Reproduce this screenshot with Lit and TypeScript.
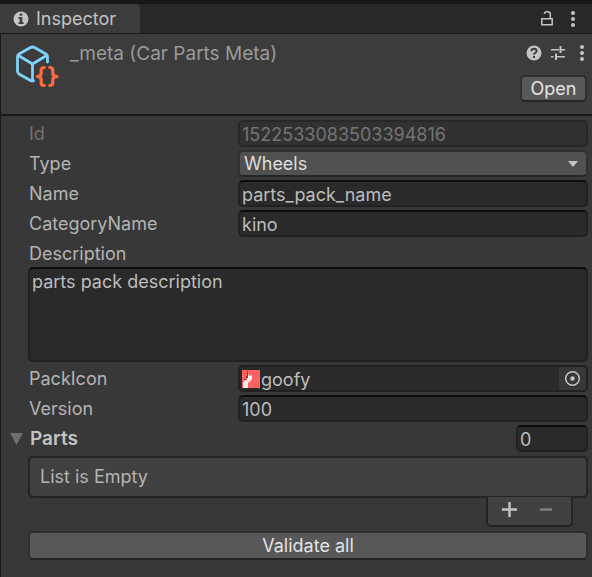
import { LitElement, html, css, svg } from "lit";
import { customElement } from "lit/decorators.js";

const dots = svg`<circle cx="3" cy="2" r="2"/><circle cx="3" cy="8" r="2"/><circle cx="3" cy="14" r="2"/>`;

@customElement("app-root")
export class AppRoot extends LitElement {
  static styles = css`
    :host {
      display: block;
      min-height: 100vh;
      box-sizing: border-box;
      padding-top: 4px;
      background: #191919;
      color: #b4b4b4;
      font: 18px/24px Inter, "Noto Sans", sans-serif;
    }
    * { box-sizing: border-box; }
    button, input, select, textarea {
      font: inherit;
      color: inherit;
      margin: 0;
      padding: 0;
      border: 0;
      outline: 0;
      min-width: 0;
    }
    svg { display: block; fill: #c4c4c4; flex: none; }
    .inspector {
      display: flex;
      flex-direction: column;
      min-height: calc(100vh - 4px);
    }
    .tabs {
      display: flex;
      align-items: stretch;
      height: 29px;
      background: #282828;
    }
    .tab {
      display: flex;
      align-items: center;
      gap: 7px;
      width: 140px;
      padding: 1px 0 0 13px;
      background: #3c3c3c;
      border-radius: 0 4px 0 0;
      color: #c4c4c4;
    }
    .tools {
      display: flex;
      align-items: center;
      margin-left: auto;
      padding-right: 16px;
      gap: 17px;
    }
    .icon { background: none; display: block; }
    .header {
      display: flex;
      height: 80px;
      margin: 1px 0 2px 1px;
      padding: 8px 5px 0 14px;
      background: #3c3c3c;
    }
    .title {
      flex: 1;
      margin: 0 0 0 11px;
      font-size: 19px;
      line-height: 24px;
      font-weight: 400;
      font-optical-sizing: none;
      color: #9a9a9a;
      white-space: nowrap;
    }
    .actions {
      display: flex;
      flex-direction: column;
      align-items: flex-end;
      gap: 14px;
      padding-top: 3px;
    }
    .actions .tools { padding: 0 2px 0 0; gap: 8px; }
    .actions .tools .more { margin-left: 5px; }
    .button {
      height: 27px;
      border: 2px solid #303030;
      border-bottom-color: #242424;
      border-radius: 5px;
      background: #585858;
      color: #e4e4e4;
      line-height: 23px;
    }
    .open { width: 67px; }
    .body {
      flex: 1;
      display: flex;
      flex-direction: column;
      gap: 3px;
      margin-left: 1px;
      padding: 4px 4px 8px 27px;
      background: #383838;
    }
    .row {
      display: grid;
      grid-template-columns: 210px 1fr;
      align-items: center;
      height: 27px;
    }
    label { padding-left: 1px; }
    .field {
      width: 100%;
      height: 27px;
      border: 2px solid #212121;
      border-top-color: #0d0d0d;
      border-radius: 5px;
      background: #2a2a2a;
      padding: 1px 2px 0;
      color: #bdbdbd;
    }
    .disabled { color: #717171; }
    .field:disabled {
      background: #313131;
      border-color: #272727;
      color: #747474;
    }
    .select { position: relative; }
    .select select {
      display: block;
      appearance: none;
      width: 100%;
      height: 27px;
      padding: 0 4px;
      border: 2px solid #303030;
      border-bottom-color: #242424;
      border-radius: 5px;
      background: #515151;
      color: #dedede;
    }
    .select svg {
      position: absolute;
      right: 9px;
      top: 11px;
      pointer-events: none;
    }
    .block { display: flex; flex-direction: column; }
    .block label { height: 27px; line-height: 27px; }
    textarea.field {
      display: block;
      height: 95px;
      padding: 1px 2px;
      resize: none;
    }
    .object {
      display: flex;
      align-items: center;
      border-color: #212121;
      padding: 0 0 0 2px;
    }
    .object input { flex: 1; background: none; height: 23px; padding: 2px 0 0 1px; }
    .picker {
      display: flex;
      align-items: center;
      justify-content: center;
      width: 27px;
      height: 23px;
      background: #383838;
      border-radius: 0 3px 3px 0;
    }
    .parts {
      display: flex;
      align-items: center;
      height: 27px;
      margin-left: -18px;
    }
    .fold {
      display: flex;
      align-items: center;
      gap: 7px;
      margin-right: auto;
      background: none;
      font-size: 19px;
      font-weight: 600;
      font-optical-sizing: none;
      color: #c4c4c4;
    }
    .fold svg { fill: #6e6e6e; }
    .parts .field { width: 72px; }
    .list { display: flex; flex-direction: column; margin: 1px 0; }
    .empty {
      height: 42px;
      padding: 0 10px;
      border: 2px solid #242424;
      border-radius: 5px;
      background: #414141;
      line-height: 38px;
    }
    .footer {
      display: flex;
      align-items: center;
      align-self: flex-end;
      gap: 22px;
      width: 87px;
      height: 30px;
      margin: -1px 15px 0 0;
      padding: 0 0 4px 14px;
      border: 2px solid #242424;
      border-top: 0;
      border-radius: 0 0 5px 5px;
      background: #414141;
    }
    .validate { width: 100%; height: 29px; line-height: 25px; }
  `;

  private field(id: string, label: string, value: string, disabled = false) {
    return html`<div class="row">
      <label for=${id} class=${disabled ? "disabled" : ""}>${label}</label>
      <input class="field" id=${id} .value=${value} ?disabled=${disabled} />
    </div>`;
  }

  render() {
    return html`<main class="inspector">
      <nav class="tabs">
        <button class="tab">
          <svg width="16" height="16" viewBox="0 0 16 16">
            <circle cx="8" cy="8" r="7.5" />
            <path fill="#3c3c3c" d="M6.7 2.5h2.600v2.300H6.700zM5.500 6h3.800v5.200h1.300v1.800H5.500v-1.800h1.200V7.800H5.500z" />
          </svg>
          Inspector
        </button>
        <div class="tools">
          <button class="icon" aria-label="Lock">
            <svg width="12" height="16" viewBox="0 0 12 16">
              <path fill="none" stroke="#c4c4c4" stroke-width="1.500" d="M.8 7.800h10.400v6H.8zM9.300 7.500V3.200Q9.300 1 7 .8H5.600Q3.500 .9 3.200 2.800" />
            </svg>
          </button>
          <button class="icon" aria-label="Tab menu">
            <svg width="6" height="16" viewBox="0 0 6 16">${dots}</svg>
          </button>
        </div>
      </nav>

      <header class="header">
        <svg width="44" height="48" viewBox="0 0 44 48">
          <g fill="none" stroke-linejoin="round" stroke-linecap="round">
            <path stroke="#7fd2fb" stroke-width="2.800" d="M32.500 20V14.500Q32.500 13 31 12L19.500 5.500Q17.500 4.500 15.500 5.500L4 12Q2.500 13 2.500 15V29Q2.500 31 4 32L15.500 38.500Q17.500 39.500 18.500 38.700M3 13.200L17.500 22L32 13.200M17.500 22V39" />
            <path stroke="#ff6b3d" stroke-width="3.200" stroke-linecap="butt" d="M30.500 25.500H29Q26.200 25.500 26.200 28.500V31Q26.200 34.500 22.500 34.500Q26.200 34.500 26.200 38V40.500Q26.200 43.500 29 43.500H30.500M33.500 25.500H35Q37.800 25.500 37.800 28.500V31Q37.800 34.500 42 34.500Q37.800 34.500 37.800 38V40.500Q37.800 43.500 35 43.500H33.500" />
          </g>
        </svg>
        <h1 class="title">_meta (Car Parts Meta)</h1>
        <div class="actions">
          <div class="tools">
            <button class="icon" aria-label="Help">
              <svg width="16" height="16" viewBox="0 0 16 16">
                <circle cx="8" cy="8" r="7.500" />
                <path fill="none" stroke="#3c3c3c" stroke-width="1.900" d="M5.400 6.200Q5.400 3.700 8 3.700T10.600 6Q10.600 7.200 9.200 7.800Q8 8.400 8 9.800" />
                <path fill="#3c3c3c" d="M7 11h2v2H7z" />
              </svg>
            </button>
            <button class="icon" aria-label="Presets">
              <svg width="16" height="16" viewBox="0 0 16 16">
                <path d="M1 4h8v1.500H1zM9.500 1h2v7h-2zM11.500 4H15v1.500h-3.500zM1 11h2.500v1.500H1zM5 8.500h2V15H5zM7 11h8v1.500H7z" />
              </svg>
            </button>
            <button class="icon more" aria-label="Component menu">
              <svg width="6" height="16" viewBox="0 0 6 16">${dots}</svg>
            </button>
          </div>
          <button class="button open">Open</button>
        </div>
      </header>

      <form class="body" @submit=${(e: Event) => e.preventDefault()}>
        ${this.field("id", "Id", "1522533083503394816", true)}
        <div class="row">
          <label for="type">Type</label>
          <div class="select">
            <select id="type"><option>Wheels</option></select>
            <svg width="12" height="7" viewBox="0 0 12 7"><path d="M1 0h10L6 6z" /></svg>
          </div>
        </div>
        ${this.field("name", "Name", "parts_pack_name")}
        ${this.field("category", "CategoryName", "kino")}
        <div class="block">
          <label for="description">Description</label>
          <textarea class="field" id="description" .value=${"parts pack description"}></textarea>
        </div>
        <div class="row">
          <label for="icon">PackIcon</label>
          <div class="field object">
            <svg width="18" height="18" viewBox="0 0 18 18">
              <path fill="#ff6062" d="M0 0h18v18H0z" />
              <path fill="#f4eceb" d="M1 18V13l2-3 3 1 0 7zM5 4l1-1 1 3 3-1v4l-3 4-2-2z" />
              <path fill="#7a4148" d="M5 1h1v5H5zM4 6h2v2H4zM2 9h2v1H2z" />
            </svg>
            <input id="icon" value="goofy" />
            <button class="picker" type="button" aria-label="Select object">
              <svg width="17" height="17" viewBox="0 0 17 17">
                <circle cx="8.500" cy="8.500" r="6.800" fill="none" stroke="#c4c4c4" stroke-width="1.500" />
                <circle cx="8.500" cy="8.500" r="2.200" />
              </svg>
            </button>
          </div>
        </div>
        ${this.field("version", "Version", "100")}
        <div class="parts">
          <button class="fold" type="button" aria-expanded="true">
            <svg width="13" height="12" viewBox="0 0 13 12"><path d="M0 0h13L6.500 12z" /></svg>
            Parts
          </button>
          <input class="field" aria-label="Parts count" value="0" />
        </div>
        <div class="list">
          <div class="empty">List is Empty</div>
          <div class="footer">
            <button class="icon" type="button" aria-label="Add part">
              <svg width="15" height="15" viewBox="0 0 15 15"><path d="M6.300 0h2.400v6.300H15v2.400H8.700V15H6.300V8.700H0V6.300h6.300z" /></svg>
            </button>
            <button class="icon" type="button" aria-label="Remove part" disabled>
              <svg width="13" height="15" viewBox="0 0 13 15"><path fill="#808080" d="M1 6.300h12v2.400H1z" /></svg>
            </button>
          </div>
        </div>
        <button class="button validate" type="button">Validate all</button>
      </form>
    </main>`;
  }
}
